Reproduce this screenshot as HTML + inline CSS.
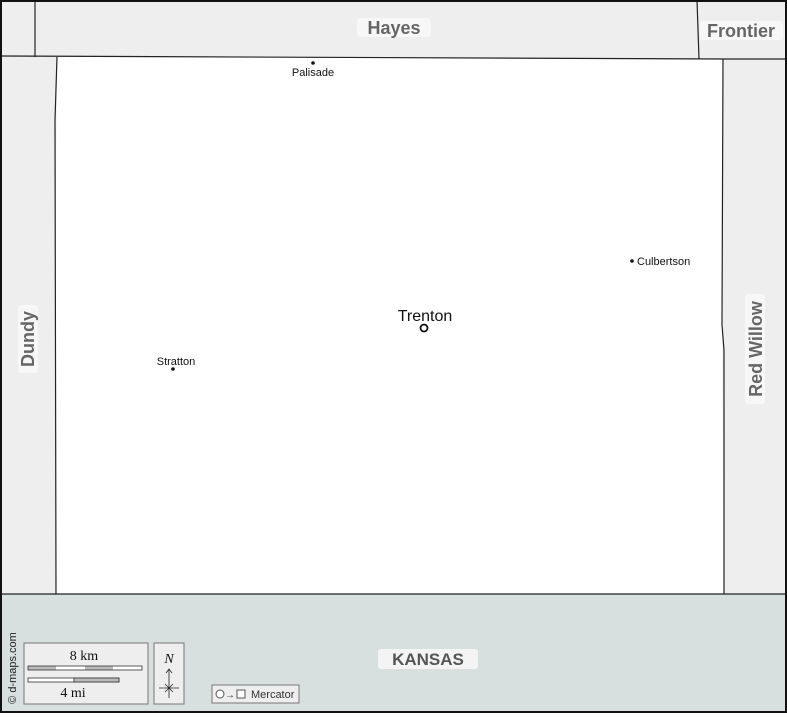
<!DOCTYPE html>
<html><head><style>
body{margin:0;width:787px;height:713px;overflow:hidden;background:#fff}
</style></head><body>
<svg width="787" height="713" viewBox="0 0 787 713" xmlns="http://www.w3.org/2000/svg" font-family="Liberation Sans, Arial, sans-serif">
<rect x="0" y="0" width="787" height="713" fill="#eeeeee"/>
<rect x="0" y="594" width="787" height="119" fill="#d7dfdf"/>
<polygon points="57,57 723,59 723,325 722,335 724,594 56,594 55,300 57,57" fill="#fff"/>
<g stroke="#222" stroke-width="1.2" fill="none">
<polyline points="0,56 723,59 787,59"/>
<line x1="35" y1="0" x2="35" y2="57"/>
<line x1="697" y1="0" x2="699" y2="59"/>
<polyline points="57,57 55,120 56,594"/>
<polyline points="723,59 722,325 724,350 724,594"/>
<line x1="0" y1="594" x2="787" y2="594"/>
</g>
<rect x="1" y="1" width="785" height="711" fill="none" stroke="#111" stroke-width="2"/>
<rect x="357" y="18" width="74" height="19" rx="3" fill="#f7f7f7"/>
<text x="394" y="34" font-size="18" font-weight="bold" fill="#666" text-anchor="middle">Hayes</text>
<rect x="700" y="21" width="83" height="19" rx="3" fill="#f7f7f7"/>
<text x="741" y="37" font-size="18" font-weight="bold" fill="#666" text-anchor="middle">Frontier</text>
<rect x="18" y="305" width="20" height="68" rx="3" fill="#f7f7f7"/>
<text transform="translate(34,339) rotate(-90)" font-size="18" font-weight="bold" fill="#666" text-anchor="middle">Dundy</text>
<rect x="745" y="294" width="20" height="110" rx="3" fill="#f7f7f7"/>
<text transform="translate(762,349) rotate(-90)" font-size="18" font-weight="bold" fill="#666" text-anchor="middle">Red Willow</text>
<rect x="378" y="649" width="100" height="20" rx="3" fill="#f4f4f4"/>
<text x="428" y="665" font-size="17" font-weight="bold" fill="#555" text-anchor="middle">KANSAS</text>
<circle cx="313" cy="63" r="1.8" fill="#111"/>
<text x="313" y="76" font-size="11" fill="#111" text-anchor="middle">Palisade</text>
<circle cx="632" cy="261" r="1.8" fill="#111"/>
<text x="637" y="265" font-size="11" fill="#111">Culbertson</text>
<circle cx="424" cy="328" r="3.5" fill="#fff" stroke="#111" stroke-width="1.8"/>
<text x="425" y="321" font-size="16" fill="#111" text-anchor="middle">Trenton</text>
<circle cx="173" cy="369" r="1.8" fill="#111"/>
<text x="176" y="365" font-size="11" fill="#111" text-anchor="middle">Stratton</text>
<text transform="translate(16,668) rotate(-90)" font-size="11" fill="#222" text-anchor="middle">© d-maps.com</text>
<rect x="24" y="643" width="124" height="61" fill="#eee" stroke="#777"/>
<text x="84" y="660" font-family="Liberation Serif, serif" font-size="14" fill="#111" text-anchor="middle">8 km</text>
<rect x="28" y="666" width="114" height="4" fill="#fff"/>
<rect x="28" y="666" width="28" height="4" fill="#bbb"/><rect x="85" y="666" width="28" height="4" fill="#bbb"/>
<rect x="28" y="666" width="114" height="4" fill="none" stroke="#333" stroke-width="0.8"/>
<rect x="28" y="678" width="91" height="4" fill="#fff" stroke="#333" stroke-width="0.8"/>
<rect x="74" y="678" width="45" height="4" fill="#bbb" stroke="#333" stroke-width="0.8"/>
<text x="73" y="697" font-family="Liberation Serif, serif" font-size="14" fill="#111" text-anchor="middle">4 mi</text>
<rect x="154" y="643" width="30" height="61" fill="#eee" stroke="#777"/>
<text x="169" y="663" font-family="Liberation Serif, serif" font-style="italic" font-size="14" fill="#111" text-anchor="middle">N</text>
<g stroke="#222" stroke-width="0.8" fill="none">
<line x1="169" y1="669" x2="169" y2="698"/><polyline points="166,673 169,669 172,673"/>
<line x1="159" y1="688" x2="179" y2="688"/><line x1="165" y1="684" x2="173" y2="692"/><line x1="173" y1="684" x2="165" y2="692"/>
</g>
<rect x="212" y="685" width="87" height="18" fill="#eee" stroke="#777"/>
<circle cx="220" cy="694" r="4" fill="#fff" stroke="#555"/>
<text x="225" y="698" font-size="10" fill="#333">→</text>
<rect x="237" y="690" width="8" height="8" fill="#fff" stroke="#555"/>
<text x="251" y="698" font-size="11" fill="#333">Mercator</text>
</svg>
</body></html>
